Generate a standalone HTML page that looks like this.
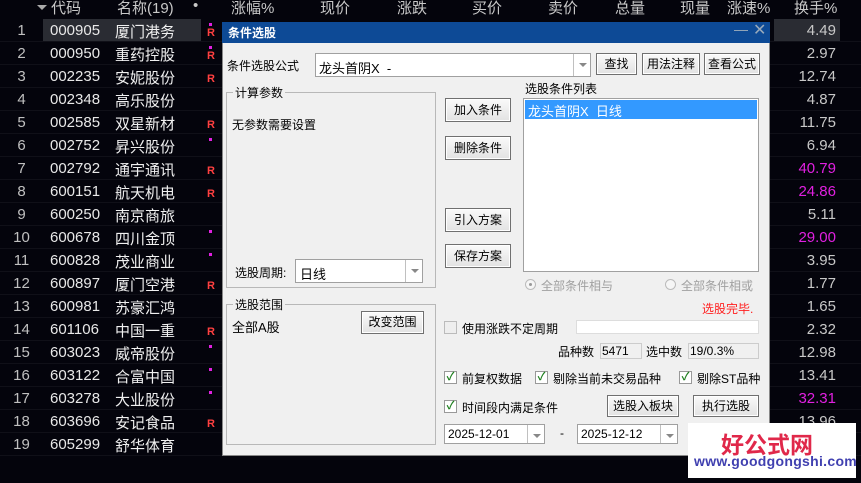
<!DOCTYPE html>
<html><head><meta charset="utf-8"><style>
*{margin:0;padding:0;box-sizing:border-box}
body{width:861px;height:483px;overflow:hidden;background:#04040c;font-family:"Liberation Sans","Noto Sans CJK SC",sans-serif;position:relative}
.a{position:absolute;white-space:nowrap}
.h{color:#c8c8c8;font-size:15px;top:-3px}
.row{position:absolute;left:0;width:861px;height:23px;border-bottom:1px solid #101018}
.n{color:#c0c0c0;font-size:15px;width:43px;text-align:center;top:3px}
.c{color:#e8e8e8;font-size:15px;left:50px;top:3px}
.nm{color:#f0f0f0;font-size:15px;left:115px;top:2px}
.r{color:#ff4040;font-size:11px;font-weight:bold;left:207px;top:8px}
.d{background:#e020e0;width:3px;height:3px;left:209px;top:4px}
.v{color:#c8c8c8;font-size:15px;right:25px;top:3px;text-align:right}
.m{color:#e020e0}
.dl{color:#000;font-size:12px}
.btn{position:absolute;background:linear-gradient(#fafafa,#e2e2e2);border:1px solid #707070;box-shadow:inset 0 0 0 1px #fff;font-size:12px;color:#000;text-align:center}
.box{position:absolute;background:#fff;border:1px solid #a0a0a0}
.grp{position:absolute;border:1px solid #b8b8b8}
.lg{position:absolute;background:#f0f0f0;font-size:12px;padding:0 2px;top:-9px;left:6px}
.arr{position:absolute;right:0;top:0;bottom:0;width:17px;border-left:1px solid #c0c0c0}
.arr:after{content:"";position:absolute;left:5px;top:9px;border:4px solid transparent;border-top:4px solid #888;border-bottom:0}
.cb{position:absolute;width:13px;height:13px;border:1px solid #999;background:#fff;font-size:11px;color:#208020;line-height:11px;text-align:center;font-weight:bold}
</style></head><body>
<div class="a" style="left:37px;top:5px;border:5px solid transparent;border-top:5px solid #aaa"></div>
<div class="a h" style="left:51px">代码</div>
<div class="a h" style="left:117px">名称(19)</div>
<div class="a h" style="left:193px">•</div>
<div class="a h" style="left:231px">涨幅%</div>
<div class="a h" style="left:320px">现价</div>
<div class="a h" style="left:397px">涨跌</div>
<div class="a h" style="left:472px">买价</div>
<div class="a h" style="left:548px">卖价</div>
<div class="a h" style="left:615px">总量</div>
<div class="a h" style="left:680px">现量</div>
<div class="a h" style="left:727px">涨速%</div>
<div class="a h" style="left:794px">换手%</div>

<div class="row" style="top:19px"><div class="a" style="left:43px;width:158px;height:22px;background:#2a2c33"></div><div class="a" style="left:774px;width:66px;height:22px;background:#2a2c33"></div><div class="a n">1</div><div class="a c">000905</div><div class="a nm">厦门港务</div><div class="a d"></div><div class="a r">R</div><div class="a v">4.49</div></div>
<div class="row" style="top:42px"><div class="a n">2</div><div class="a c">000950</div><div class="a nm">重药控股</div><div class="a d"></div><div class="a r">R</div><div class="a v">2.97</div></div>
<div class="row" style="top:65px"><div class="a n">3</div><div class="a c">002235</div><div class="a nm">安妮股份</div><div class="a r">R</div><div class="a v">12.74</div></div>
<div class="row" style="top:88px"><div class="a n">4</div><div class="a c">002348</div><div class="a nm">高乐股份</div><div class="a v">4.87</div></div>
<div class="row" style="top:111px"><div class="a n">5</div><div class="a c">002585</div><div class="a nm">双星新材</div><div class="a r">R</div><div class="a v">11.75</div></div>
<div class="row" style="top:134px"><div class="a n">6</div><div class="a c">002752</div><div class="a nm">昇兴股份</div><div class="a d"></div><div class="a v">6.94</div></div>
<div class="row" style="top:157px"><div class="a n">7</div><div class="a c">002792</div><div class="a nm">通宇通讯</div><div class="a r">R</div><div class="a v m">40.79</div></div>
<div class="row" style="top:180px"><div class="a n">8</div><div class="a c">600151</div><div class="a nm">航天机电</div><div class="a r">R</div><div class="a v m">24.86</div></div>
<div class="row" style="top:203px"><div class="a n">9</div><div class="a c">600250</div><div class="a nm">南京商旅</div><div class="a v">5.11</div></div>
<div class="row" style="top:226px"><div class="a n">10</div><div class="a c">600678</div><div class="a nm">四川金顶</div><div class="a d"></div><div class="a v m">29.00</div></div>
<div class="row" style="top:249px"><div class="a n">11</div><div class="a c">600828</div><div class="a nm">茂业商业</div><div class="a d"></div><div class="a v">3.95</div></div>
<div class="row" style="top:272px"><div class="a n">12</div><div class="a c">600897</div><div class="a nm">厦门空港</div><div class="a r">R</div><div class="a v">1.77</div></div>
<div class="row" style="top:295px"><div class="a n">13</div><div class="a c">600981</div><div class="a nm">苏豪汇鸿</div><div class="a v">1.65</div></div>
<div class="row" style="top:318px"><div class="a n">14</div><div class="a c">601106</div><div class="a nm">中国一重</div><div class="a r">R</div><div class="a v">2.32</div></div>
<div class="row" style="top:341px"><div class="a n">15</div><div class="a c">603023</div><div class="a nm">威帝股份</div><div class="a d"></div><div class="a v">12.98</div></div>
<div class="row" style="top:364px"><div class="a n">16</div><div class="a c">603122</div><div class="a nm">合富中国</div><div class="a d"></div><div class="a v">13.41</div></div>
<div class="row" style="top:387px"><div class="a n">17</div><div class="a c">603278</div><div class="a nm">大业股份</div><div class="a d"></div><div class="a v m">32.31</div></div>
<div class="row" style="top:410px"><div class="a n">18</div><div class="a c">603696</div><div class="a nm">安记食品</div><div class="a r">R</div><div class="a v">13.96</div></div>
<div class="row" style="top:433px"><div class="a n">19</div><div class="a c">605299</div><div class="a nm">舒华体育</div></div>

<!-- dialog -->
<div class="a" style="left:222px;top:22px;width:548px;height:434px;background:#f0f0f0;border:1px solid #888"></div>
<div class="a" style="left:222px;top:22px;width:548px;height:21px;background:#0d4a96"></div>
<div class="a" style="left:228px;top:24px;color:#fff;font-size:12px;font-weight:bold">条件选股</div>
<div class="a" style="left:734px;top:21px;color:#9ab;font-size:14px">—</div>
<div class="a" style="left:753px;top:20px;color:#9ab;font-size:16px">✕</div>

<div class="a dl" style="left:227px;top:57px">条件选股公式</div>
<div class="box" style="left:315px;top:53px;width:276px;height:24px"><div class="a dl" style="left:3px;top:4px;font-size:13px">龙头首阴X&nbsp; -</div><div class="arr"></div></div>
<div class="btn" style="left:596px;top:53px;width:41px;height:22px;line-height:20px">查找</div>
<div class="btn" style="left:642px;top:53px;width:58px;height:22px;line-height:20px">用法注释</div>
<div class="btn" style="left:704px;top:53px;width:56px;height:22px;line-height:20px">查看公式</div>

<div class="grp" style="left:226px;top:92px;width:210px;height:196px"><div class="lg">计算参数</div></div>
<div class="a dl" style="left:232px;top:116px">无参数需要设置</div>
<div class="a dl" style="left:235px;top:264px">选股周期:</div>
<div class="box" style="left:295px;top:259px;width:128px;height:24px"><div class="a dl" style="left:4px;top:4px;font-size:13px">日线</div><div class="arr"></div></div>

<div class="grp" style="left:226px;top:304px;width:210px;height:141px"><div class="lg">选股范围</div></div>
<div class="a dl" style="left:232px;top:317px;font-size:13px">全部A股</div>
<div class="btn" style="left:361px;top:311px;width:63px;height:23px;line-height:21px">改变范围</div>

<div class="btn" style="left:445px;top:98px;width:66px;height:24px;line-height:22px">加入条件</div>
<div class="btn" style="left:445px;top:136px;width:66px;height:24px;line-height:22px">删除条件</div>
<div class="btn" style="left:445px;top:208px;width:66px;height:24px;line-height:22px">引入方案</div>
<div class="btn" style="left:445px;top:244px;width:66px;height:24px;line-height:22px">保存方案</div>

<div class="a dl" style="left:525px;top:80px">选股条件列表</div>
<div class="box" style="left:523px;top:98px;width:236px;height:174px"></div>
<div class="a" style="left:525px;top:100px;width:232px;height:19px;background:#3399ff;color:#fff;font-size:13px;padding:1px 3px">龙头首阴X&nbsp; 日线</div>

<div class="a" style="left:525px;top:279px;width:11px;height:11px;border-radius:50%;border:1px solid #bbb;background:#f6f6f6"><div class="a" style="left:3px;top:3px;width:3px;height:3px;border-radius:50%;background:#999"></div></div>
<div class="a" style="left:541px;top:277px;font-size:12px;color:#a0a0a0">全部条件相与</div>
<div class="a" style="left:665px;top:279px;width:11px;height:11px;border-radius:50%;border:1px solid #bbb;background:#f6f6f6"></div>
<div class="a" style="left:681px;top:277px;font-size:12px;color:#a0a0a0">全部条件相或</div>

<div class="a" style="left:702px;top:300px;font-size:12px;color:#ff2020">选股完毕.</div>

<div class="cb" style="left:444px;top:321px;border-color:#bbb;background:#eee"></div>
<div class="a dl" style="left:462px;top:320px">使用涨跌不定周期</div>
<div class="box" style="left:576px;top:320px;width:183px;height:14px;border-color:#ddd"></div>
<div class="a dl" style="left:558px;top:343px">品种数</div>
<div class="box" style="left:600px;top:343px;width:42px;height:16px;background:#f0f0f0;border-color:#ccc"><div class="a dl" style="left:1px;top:0">5471</div></div>
<div class="a dl" style="left:646px;top:343px">选中数</div>
<div class="box" style="left:688px;top:343px;width:71px;height:16px;background:#f0f0f0;border-color:#ccc"><div class="a dl" style="left:1px;top:0">19/0.3%</div></div>

<div class="cb" style="left:444px;top:371px">✓</div><div class="a dl" style="left:462px;top:370px">前复权数据</div>
<div class="cb" style="left:535px;top:371px">✓</div><div class="a dl" style="left:553px;top:370px">剔除当前未交易品种</div>
<div class="cb" style="left:679px;top:371px">✓</div><div class="a dl" style="left:697px;top:370px">剔除ST品种</div>
<div class="cb" style="left:444px;top:400px">✓</div><div class="a dl" style="left:462px;top:399px">时间段内满足条件</div>
<div class="btn" style="left:607px;top:395px;width:72px;height:22px;line-height:20px">选股入板块</div>
<div class="btn" style="left:693px;top:395px;width:66px;height:22px;line-height:20px">执行选股</div>

<div class="box" style="left:444px;top:424px;width:101px;height:20px"><div class="a dl" style="left:3px;top:2px">2025-12-01</div><div class="arr"></div></div>
<div class="a dl" style="left:560px;top:426px">-</div>
<div class="box" style="left:577px;top:424px;width:101px;height:20px"><div class="a dl" style="left:3px;top:2px">2025-12-12</div><div class="arr"></div></div>

<div class="a" style="left:688px;top:423px;width:168px;height:55px;background:#fff"></div>
<div class="a" style="left:721px;top:426px;font-size:23px;font-weight:bold;color:#e0284a;font-family:'Noto Sans CJK SC',sans-serif">好公式网</div>
<div class="a" style="left:694px;top:453px;font-size:14px;font-weight:bold;color:#4040b0;letter-spacing:0.3px">www.goodgongshi.com</div>
</body></html>
